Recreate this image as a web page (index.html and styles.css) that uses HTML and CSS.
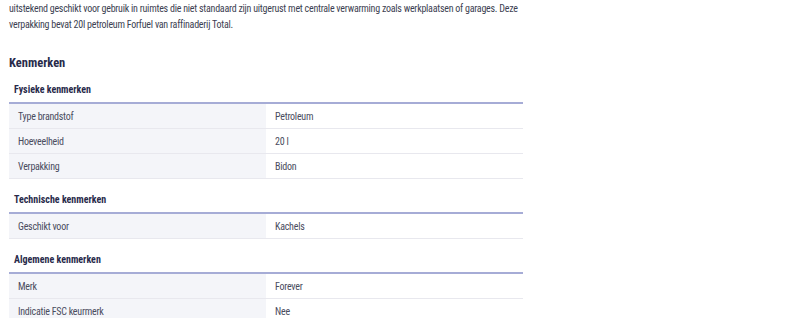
FILE: index.html
```html
<!DOCTYPE html>
<html lang="nl">
<head>
    <meta charset="UTF-8">
    <meta name="viewport" content="width=device-width, initial-scale=1.0">
    <title>Petroleum Forfuel 20 l</title>
    <link rel="stylesheet" href="styles.css">
</head>
<body>
    <div class="product">
        <p class="description">uitstekend geschikt voor gebruik in ruimtes die niet standaard zijn uitgerust met centrale verwarming zoals werkplaatsen of garages. Deze verpakking bevat 20l petroleum Forfuel van raffinaderij Total.</p>

        <h2>Kenmerken</h2>

        <div class="spec-group">
            <h3>Fysieke kenmerken</h3>
            <table class="specs">
                <tr><td>Type brandstof</td><td>Petroleum</td></tr>
                <tr><td>Hoeveelheid</td><td>20 l</td></tr>
                <tr><td>Verpakking</td><td>Bidon</td></tr>
            </table>
        </div>

        <div class="spec-group">
            <h3>Technische kenmerken</h3>
            <table class="specs">
                <tr><td>Geschikt voor</td><td>Kachels</td></tr>
            </table>
        </div>

        <div class="spec-group">
            <h3>Algemene kenmerken</h3>
            <table class="specs">
                <tr><td>Merk</td><td>Forever</td></tr>
                <tr><td>Indicatie FSC keurmerk</td><td>Nee</td></tr>
            </table>
        </div>
    </div>
</body>
</html>
```

FILE: styles.css
```css
body {
    margin: 0;
    padding: 1px 9px 0;
    background: #fff;
    font-family: Roboto, "Liberation Sans", sans-serif;
    font-stretch: condensed;
    color: #3d3f52;
}
.product {
    width: 514px;
}
.description {
    margin: 0;
    font-size: 10px;
    line-height: 16px;
    letter-spacing: -0.25px;
}
h2 {
    margin: 20px 0 0;
    font-size: 12.5px;
    line-height: 20px;
    font-weight: bold;
    color: #282a4a;
}
.spec-group {
    margin-top: 5px;
}
.spec-group + .spec-group {
    margin-top: 9px;
}
h3 {
    margin: 0;
    padding-left: 5px;
    font-size: 10px;
    line-height: 24px;
    font-weight: bold;
    color: #282a4a;
}
.specs {
    width: 100%;
    border-collapse: collapse;
    border-top: 2px solid #a6acd6;
    table-layout: fixed;
}
.specs td {
    height: 24px;
    padding: 0 9px;
    font-size: 10px;
    letter-spacing: -0.25px;
    color: #4a4c5e;
    border-bottom: 1px solid #e8e8ee;
}
.specs td:first-child {
    background: #f4f5f9;
}
```
